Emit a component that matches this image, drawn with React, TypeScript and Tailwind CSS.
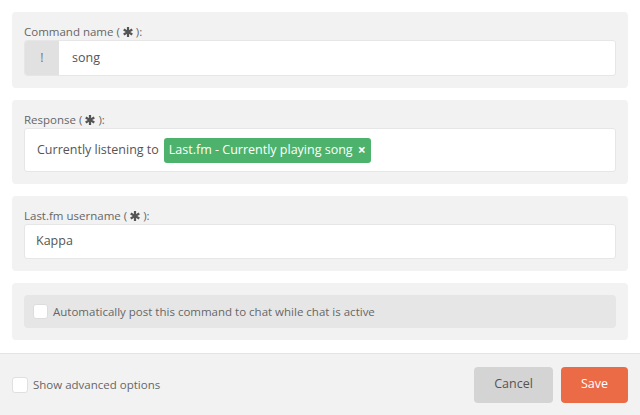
import React from "react";

function Star() {
  return (
    <svg width="10" height="10" viewBox="0 0 10 10" className="inline-block mx-[3px] -mt-[2px]" aria-hidden>
      <g stroke="#555" strokeWidth="2.2" strokeLinecap="butt">
        <line x1="5" y1="0" x2="5" y2="10" />
        <line x1="0.7" y1="2.5" x2="9.3" y2="7.5" />
        <line x1="0.7" y1="7.5" x2="9.3" y2="2.5" />
      </g>
    </svg>
  );
}

function Label({ children }: { children: React.ReactNode }) {
  return (
    <div className="text-[11.5px] leading-[16px] text-[#666]">
      {children} (<Star />):
    </div>
  );
}

export default function App() {
  return (
    <div
      className="w-[640px] h-[415px] bg-white flex flex-col overflow-hidden"
      style={{ fontFamily: '"Open Sans", "Noto Sans", sans-serif' }}
    >
      <div className="flex flex-col gap-3 p-3 pb-[13px]">
        <div className="bg-[#f2f2f2] rounded-[4px] p-3">
          <Label>Command name</Label>
          <div className="flex h-[36px] bg-white border border-[#e6e6e6] rounded-[3px] overflow-hidden">
            <div className="w-[34px] bg-[#e1e1e1] flex items-center justify-center text-[12.5px] text-[#777]">!</div>
            <div className="flex items-center pl-[13px] text-[12.5px] text-[#555]">song</div>
          </div>
        </div>

        <div className="bg-[#f2f2f2] rounded-[4px] p-3">
          <Label>Response</Label>
          <div className="flex items-center h-[44px] bg-white border border-[#e6e6e6] rounded-[3px] pl-[12px] text-[12.5px] text-[#555]">
            <span>Currently listening to</span>
            <span className="ml-[5px] h-[25px] flex items-center rounded-[3px] bg-[#4cb26c] text-white px-[5px]">
              Last.fm - Currently playing song
              <span className="ml-[5px] font-bold text-[14px] leading-none">×</span>
            </span>
          </div>
        </div>

        <div className="bg-[#f2f2f2] rounded-[4px] p-3">
          <Label>Last.fm username</Label>
          <div className="flex items-center h-[35px] bg-white border border-[#e6e6e6] rounded-[3px] pl-[11px] text-[12.5px] text-[#555]">
            Kappa
          </div>
        </div>

        <div className="bg-[#f2f2f2] rounded-[4px] p-3">
          <div className="flex items-center h-[33px] bg-[#e6e6e6] rounded-[4px] pl-[9px]">
            <span className="w-[15px] h-[15px] bg-white rounded-[3px] border border-[#ddd]" />
            <span className="ml-[5px] text-[11.5px] text-[#666]">Automatically post this command to chat while chat is active</span>
          </div>
        </div>
      </div>

      <div className="flex-1 bg-[#f2f2f2] border-t border-[#e4e4e4] flex items-center justify-between pl-3 pr-3">
        <div className="flex items-center">
          <span className="w-[16px] h-[16px] bg-white rounded-[3px] border border-[#e0e0e0]" />
          <span className="ml-[5px] text-[11.5px] text-[#666]">Show advanced options</span>
        </div>
        <div className="flex gap-2">
          <button className="h-[36px] w-[79px] rounded-[4px] bg-[#d4d4d4] text-[12.5px] text-[#555]">Cancel</button>
          <button className="h-[36px] w-[67px] rounded-[4px] bg-[#eb6b47] text-[12.5px] text-white">Save</button>
        </div>
      </div>
    </div>
  );
}
